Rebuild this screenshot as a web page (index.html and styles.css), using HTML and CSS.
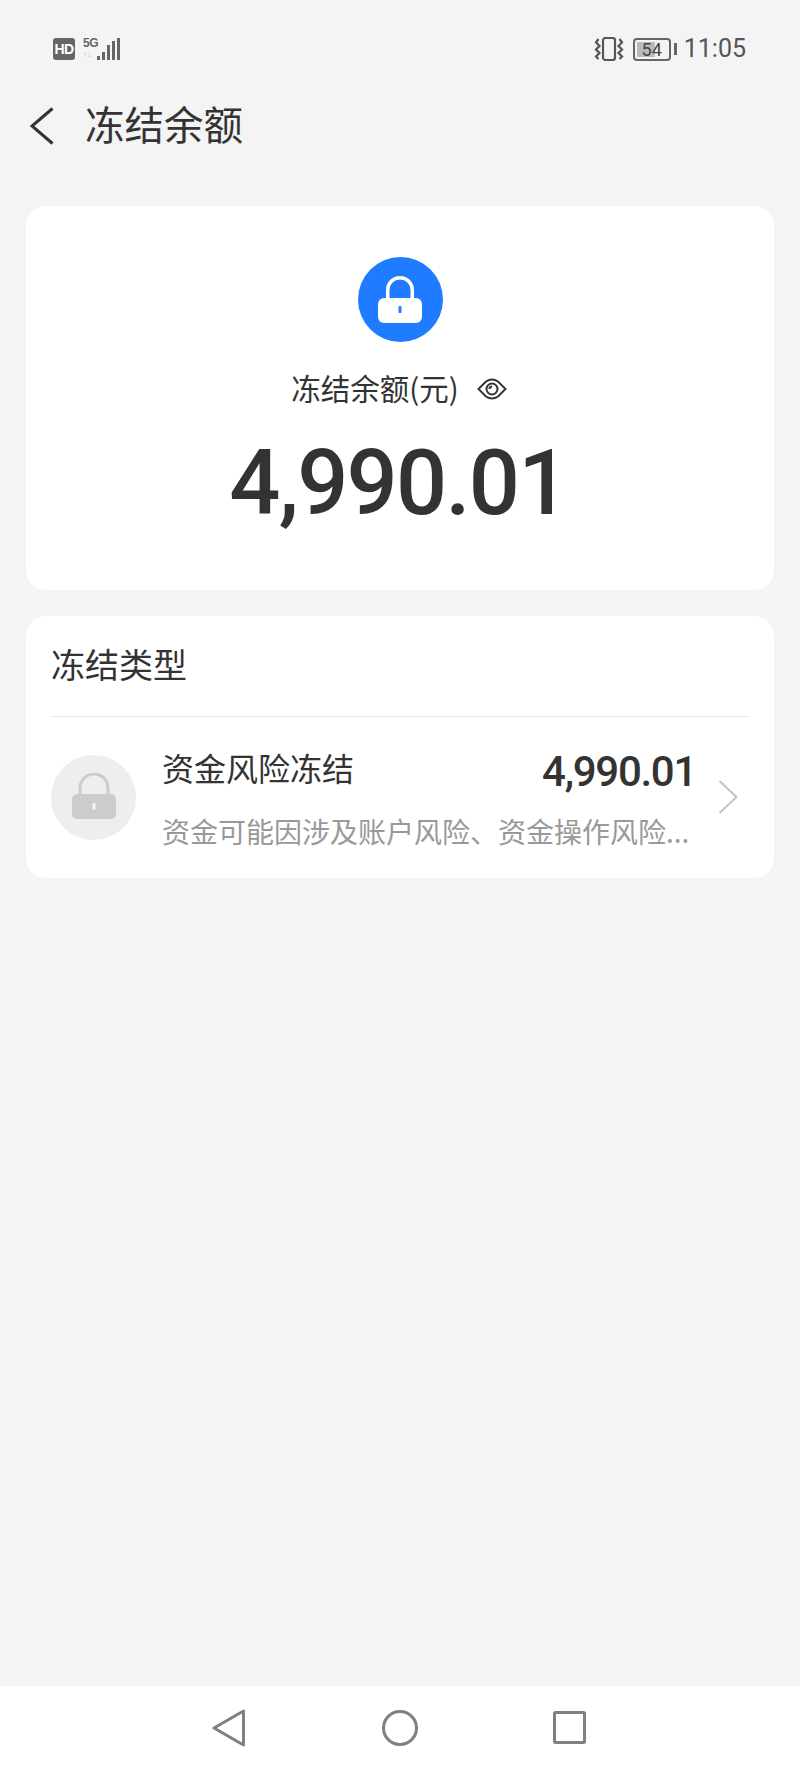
FILE: index.html
```html
<!DOCTYPE html>
<html lang="zh-CN">
<head>
  <meta charset="UTF-8">
  <title>冻结余额</title>
  <link rel="stylesheet" href="styles.css">
</head>
<body>
  <div class="screen">

    <div class="status-bar">
      <div class="status-left">
        <span class="hd">HD</span>
        <div class="net">
          <span class="net-5g">5G</span>
          <span class="net-arrows">↑↓</span>
        </div>
        <svg class="signal" width="24" height="22" viewBox="0 0 24 22">
          <rect x="0" y="18" width="3" height="4" fill="#666"/>
          <rect x="5" y="14" width="3" height="8" fill="#666"/>
          <rect x="10" y="7" width="3" height="15" fill="#666"/>
          <rect x="15" y="3" width="3" height="19" fill="#666"/>
          <rect x="20" y="0" width="3" height="22" fill="#666"/>
        </svg>
      </div>
      <div class="status-right">
        <svg class="vibrate" width="30" height="24" viewBox="0 0 30 24" fill="none" stroke="#555" stroke-width="2.200">
          <rect x="9" y="1" width="12" height="22" rx="2.500"/>
          <path d="M4.500 2L2 5.500l3.500 3.500L2 12.500 5.500 16 2 19.500 4.500 22"/>
          <path d="M25.500 2L28 5.500 24.500 9l3.500 3.500-3.500 3.500 3.500 3.500-2.500 2.500"/>
        </svg>
        <div class="battery">
          <div class="battery-body"><span class="battery-fill"></span><span class="battery-num">54</span></div>
          <span class="battery-tip"></span>
        </div>
        <span class="clock">11:05</span>
      </div>
    </div>

    <div class="header">
      <svg class="back" width="24" height="38" viewBox="0 0 24 38" fill="none" stroke="#333" stroke-width="3">
        <path d="M22.500 1.500L2 19l20.500 17.500"/>
      </svg>
      <h1 class="title">冻结余额</h1>
    </div>

    <div class="card summary">
      <div class="lock-circle blue">
        <svg width="44" height="48" viewBox="0 0 44 48">
          <path d="M9.750 26V14a12.250 12.250 0 0 1 24.500 0v12" fill="none" stroke="#fff" stroke-width="3.500"/>
          <rect x="0" y="22" width="44" height="25" rx="6" fill="#fff"/>
          <rect x="20.500" y="30" width="3" height="7" rx="1" fill="#1f7bff"/>
        </svg>
      </div>
      <div class="summary-label">
        <span>冻结余额(元)</span>
        <svg class="eye" width="30" height="24" viewBox="0 0 30 24" fill="none" stroke="#333" stroke-width="2">
          <path d="M1.500 12L9 4.500Q15 .5 21 4.500L28.500 12 21 19.500Q15 23.500 9 19.500z"/>
          <circle cx="15" cy="12" r="5.500"/>
          <path d="M12.500 12a2.500 2.500 0 0 1 2.500-2.500"/>
        </svg>
      </div>
      <div class="summary-amount">4,990.01</div>
    </div>

    <div class="card types">
      <div class="types-title">冻结类型</div>
      <div class="type-row">
        <div class="lock-circle grey">
          <svg width="44" height="48" viewBox="0 0 44 48">
            <path d="M8 24V15a14 14 0 0 1 28 0v9" fill="none" stroke="#ccc" stroke-width="3"/>
            <rect x="0" y="21" width="44" height="25" rx="5" fill="#ccc"/>
            <rect x="20.500" y="30" width="3" height="7" rx="1" fill="#f3f3f3"/>
          </svg>
        </div>
        <div class="type-info">
          <div class="type-top">
            <span class="type-name">资金风险冻结</span>
            <span class="type-amount">4,990.01</span>
          </div>
          <div class="type-desc">资金可能因涉及账户风险、资金操作风险...</div>
        </div>
        <svg class="chevron" width="20" height="34" viewBox="0 0 20 34" fill="none" stroke="#c4c4c4" stroke-width="2">
          <path d="M1.500 1l17 16-17 16"/>
        </svg>
      </div>
    </div>

    <div class="nav-bar">
      <svg width="34" height="38" viewBox="0 0 34 38" fill="none" stroke="#808080" stroke-width="3" stroke-linejoin="round">
        <path d="M31.500 2v34L2 19z"/>
      </svg>
      <svg width="38" height="38" viewBox="0 0 38 38" fill="none" stroke="#808080" stroke-width="3">
        <circle cx="19" cy="19" r="16.500"/>
      </svg>
      <svg width="33" height="33" viewBox="0 0 33 33" fill="none" stroke="#808080" stroke-width="3" stroke-linejoin="round">
        <rect x="1.500" y="1.500" width="30" height="30" rx="1"/>
      </svg>
    </div>

  </div>
</body>
</html>
```

FILE: styles.css
```css
* {
  box-sizing: border-box;
}

body {
  margin: 0;
  background: #f4f4f4;
  color: #333;
  font-family: "Noto Sans CJK SC", "Noto Sans", sans-serif;
}

.screen {
  display: flex;
  flex-direction: column;
  height: 1769px;
}

/* status bar */
.status-bar {
  display: flex;
  justify-content: space-between;
  align-items: center;
  height: 96px;
  padding: 2px 54px 0 53px;
  flex-shrink: 0;
}

.status-left,
.status-right {
  display: flex;
  align-items: center;
}

.hd {
  display: block;
  width: 22px;
  height: 22px;
  border-radius: 3px;
  background: #666;
  color: #fff;
  font: bold 14px/22px "Liberation Sans", sans-serif;
  letter-spacing: -0.500px;
  text-align: center;
}

.net {
  display: flex;
  flex-direction: column;
  margin-left: 8px;
  width: 14px;
  font-family: "Liberation Sans", sans-serif;
  line-height: 11px;
}

.net-5g {
  font-size: 12px;
  font-weight: bold;
  letter-spacing: -0.500px;
  color: #666;
}

.net-arrows {
  font-size: 8px;
  color: #bbb;
}

.vibrate {
  margin-right: 9px;
}

.battery {
  display: flex;
  align-items: center;
  gap: 3px;
  margin-right: 7px;
}

.battery-body {
  position: relative;
  width: 38px;
  height: 23px;
  border: 2px solid #666;
  border-radius: 4px;
}

.battery-fill {
  position: absolute;
  top: 2px;
  left: 2px;
  bottom: 2px;
  width: 18px;
  background: #bbb;
}

.battery-num {
  position: absolute;
  inset: 0;
  font: 18px/19px Roboto, sans-serif;
  color: #444;
  text-align: center;
}

.battery-tip {
  width: 3px;
  height: 12px;
  background: #666;
}

.clock {
  font: 25px/30px Roboto, sans-serif;
  color: #555;
}

/* header */
.header {
  display: flex;
  align-items: center;
  height: 60px;
  padding-left: 30px;
  margin-bottom: 50px;
  flex-shrink: 0;
}

.title {
  margin: 0 0 0 31px;
  padding-bottom: 6px;
  font-size: 39.500px;
  font-weight: 400;
  line-height: 54px;
}

/* cards */
.card {
  margin: 0 26px;
  background: #fff;
  border-radius: 20px;
  flex-shrink: 0;
}

.summary {
  display: flex;
  flex-direction: column;
  align-items: center;
  height: 384px;
  margin-bottom: 26px;
  padding-top: 51px;
}

.lock-circle {
  display: flex;
  justify-content: center;
  align-items: center;
  width: 85px;
  height: 85px;
  border-radius: 50%;
  flex-shrink: 0;
}

.lock-circle.blue {
  background: #1f7bff;
}

.lock-circle.grey {
  background: #eee;
}

.summary-label {
  display: flex;
  align-items: center;
  gap: 18px;
  margin-top: 23px;
  padding-right: 2px;
  font-size: 29.500px;
  line-height: 44px;
}

.eye {
  margin-top: 3px;
}

.summary-amount {
  margin-top: 25px;
  padding-right: 3px;
  font: 500 90px/100px Roboto, sans-serif;
  letter-spacing: -1.700px;
}

.types {
  height: 262px;
  padding: 0 25px;
}

.types-title {
  height: 101px;
  border-bottom: 1px solid #ececec;
  font-size: 34px;
  line-height: 96px;
}

.type-row {
  display: flex;
  align-items: center;
  height: 160px;
  padding-right: 11px;
}

.type-info {
  flex: 1;
  min-width: 0;
  margin-left: 26px;
}

.type-top {
  display: flex;
  justify-content: space-between;
  align-items: center;
  height: 50px;
}

.type-name {
  margin-top: -4px;
  font-size: 32px;
}

.type-amount {
  margin-top: 7px;
  font: 500 42px/50px Roboto, sans-serif;
  letter-spacing: -1.300px;
}

.type-desc {
  margin-top: 17px;
  font-size: 28px;
  line-height: 40px;
  color: #999;
  white-space: nowrap;
}

.chevron {
  margin-left: 22px;
  flex-shrink: 0;
}

/* bottom navigation */
.nav-bar {
  display: flex;
  align-items: center;
  gap: 134.500px;
  height: 83px;
  margin-top: auto;
  padding-left: 212px;
  background: #fff;
  flex-shrink: 0;
}
```
